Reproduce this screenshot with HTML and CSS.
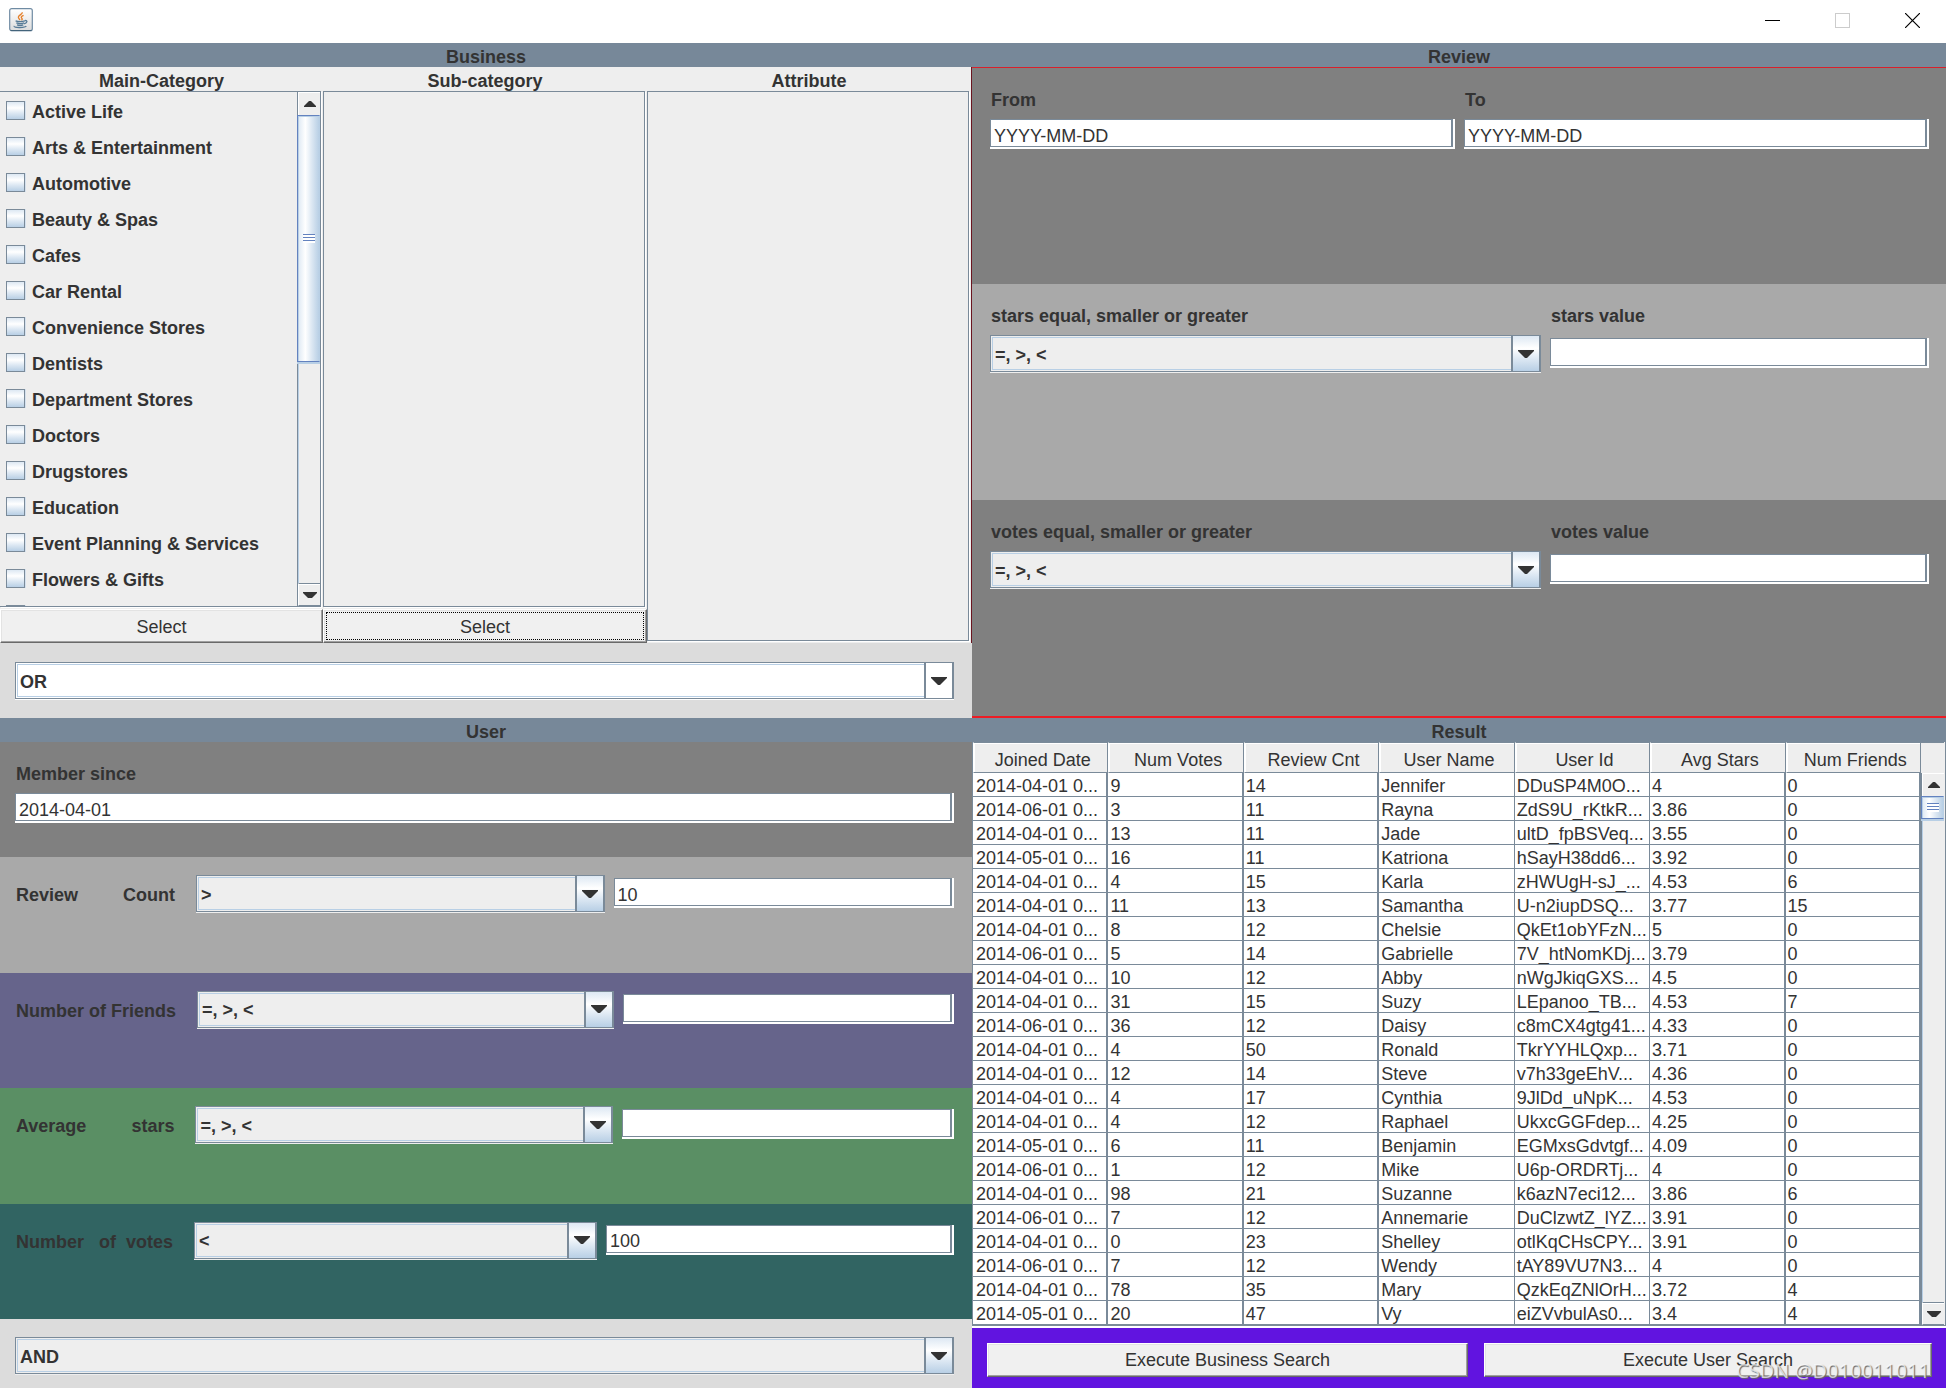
FILE: index.html
```html
<!DOCTYPE html>
<html lang="en">
<head>
<meta charset="utf-8">
<title>Business and User Search</title>
<link rel="stylesheet" href="styles.css">
</head>
<body>
<svg width="0" height="0" class="defs" aria-hidden="true">
  <symbol id="down" viewBox="0 0 16 8"><path d="M0 0h16v1L9 8H7L0 1z" fill="#333"/></symbol>
  <symbol id="down-small" viewBox="0 0 14 6"><path d="M0 0h14v1L9 6H5L0 1z" fill="#333"/></symbol>
  <symbol id="up-small" viewBox="0 0 12 6"><path d="M0 6h12V5L7 0H5L0 5z" fill="#333"/></symbol>
</svg>
<div class="app">
  <header class="titlebar">
    <svg class="java" viewBox="0 0 24 24" aria-label="Java">
      <defs><linearGradient id="tile" x1="0" y1="0" x2="0" y2="1"><stop offset="0" stop-color="#fff"/><stop offset="1" stop-color="#dcdcdc"/></linearGradient></defs>
      <rect x=".7" y=".7" width="22.600" height="22" rx="2" fill="url(#tile)" stroke="#6f8ba3" stroke-width="1.200"/>
      <path d="M1.500 22.600h21" stroke="#3f6078" stroke-width="1"/>
      <path d="M13.200 4.200c.6 2.200-4.600 3.300-3.800 5.400.3.900 1.300 1.400 1.400 2.600M14.600 7.400c-1.800.8-3.400 1.700-1.500 3.200.5.600-.1 1.200-.7 1.700" fill="none" stroke="#e5802b" stroke-width="1.400"/>
      <path d="M6.600 12.800c2.200.9 6.800.9 9.400.1M7.300 14.800c2 .8 5.600.8 7.900.1M8 16.800c1.900.6 4.300.6 6.300 0M16 12.600c2.800-.6 2.600 2.200-.8 3.200M5.400 18c-2 1.900 11 2.100 11.800.1" fill="none" stroke="#557a96" stroke-width="1.300"/>
    </svg>
    <div class="window-buttons">
      <button type="button" aria-label="Minimize"><svg width="15" height="15" viewBox="0 0 15 15"><path d="M0 7.500h15" stroke="#000"/></svg></button>
      <button type="button" aria-label="Maximize" disabled><svg width="15" height="15" viewBox="0 0 15 15"><rect x=".5" y=".5" width="14" height="14" fill="none" stroke="#ccc"/></svg></button>
      <button type="button" aria-label="Close"><svg width="15" height="15" viewBox="0 0 15 15"><path d="M0 0l15 15M15 0L0 15" stroke="#000" stroke-width="1.200"/></svg></button>
    </div>
  </header>

  <main class="quadrants">
    <section class="quadrant business">
      <h2 class="heading">Business</h2>
      <div class="lists">
        <div class="list-column">
          <h3>Main-Category</h3>
          <div class="list-box">
            <div class="checks">
              <label><input type="checkbox">Active Life</label>
              <label><input type="checkbox">Arts &amp; Entertainment</label>
              <label><input type="checkbox">Automotive</label>
              <label><input type="checkbox">Beauty &amp; Spas</label>
              <label><input type="checkbox">Cafes</label>
              <label><input type="checkbox">Car Rental</label>
              <label><input type="checkbox">Convenience Stores</label>
              <label><input type="checkbox">Dentists</label>
              <label><input type="checkbox">Department Stores</label>
              <label><input type="checkbox">Doctors</label>
              <label><input type="checkbox">Drugstores</label>
              <label><input type="checkbox">Education</label>
              <label><input type="checkbox">Event Planning &amp; Services</label>
              <label><input type="checkbox">Flowers &amp; Gifts</label>
              <label><input type="checkbox" aria-label="Food"></label>
            </div>
            <div class="scrollbar">
              <button type="button" class="step" aria-label="Scroll up"><svg width="12" height="6"><use href="#up-small"/></svg></button>
              <div class="track"><div class="thumb thumb-long"><i class="grip"></i></div></div>
              <button type="button" class="step step-down" aria-label="Scroll down"><svg width="14" height="6"><use href="#down-small"/></svg></button>
            </div>
          </div>
          <button type="button" class="push">Select</button>
        </div>
        <div class="list-column">
          <h3>Sub-category</h3>
          <div class="list-box"></div>
          <button type="button" class="push push-focus">Select</button>
        </div>
        <div class="list-column">
          <h3>Attribute</h3>
          <div class="list-box"></div>
        </div>
      </div>
      <div class="joiner">
        <div class="combo combo-white"><select aria-label="Business match"><option>OR</option><option>AND</option></select><span class="arrow"><svg width="16" height="8"><use href="#down"/></svg></span></div>
      </div>
    </section>

    <section class="quadrant">
      <h2 class="heading">Review</h2>
      <div class="review">
        <div class="review-panel gray halves">
          <div class="field"><label for="from">From</label><input class="text" id="from" value="YYYY-MM-DD"></div>
          <div class="field"><label for="to">To</label><input class="text" id="to" value="YYYY-MM-DD"></div>
        </div>
        <div class="review-panel silver compare">
          <div class="field"><label for="stars-op">stars equal, smaller or greater</label>
            <div class="combo"><select id="stars-op"><option>=, &gt;, &lt;</option></select><span class="arrow"><svg width="16" height="8"><use href="#down"/></svg></span></div></div>
          <div class="field field-value"><label for="stars-val">stars value</label><input class="text" id="stars-val"></div>
        </div>
        <div class="review-panel gray compare">
          <div class="field"><label for="votes-op">votes equal, smaller or greater</label>
            <div class="combo"><select id="votes-op"><option>=, &gt;, &lt;</option></select><span class="arrow"><svg width="16" height="8"><use href="#down"/></svg></span></div></div>
          <div class="field field-value"><label for="votes-val">votes value</label><input class="text" id="votes-val"></div>
        </div>
      </div>
    </section>

    <section class="quadrant">
      <h2 class="heading">User</h2>
      <div class="user">
        <div class="user-panel gray member">
          <label for="since">Member since</label><input class="text" id="since" value="2014-04-01">
        </div>
        <div class="user-panel silver">
          <label for="rc-op">Review         Count</label>
          <div class="combo"><select id="rc-op"><option>&gt;</option></select><span class="arrow"><svg width="16" height="8"><use href="#down"/></svg></span></div>
          <input class="text" aria-label="Review count value" value="10">
        </div>
        <div class="user-panel violet open">
          <label for="nf-op">Number of Friends</label>
          <div class="combo"><select id="nf-op"><option>=, &gt;, &lt;</option></select><span class="arrow"><svg width="16" height="8"><use href="#down"/></svg></span></div>
          <input class="text" aria-label="Number of friends value">
        </div>
        <div class="user-panel green open">
          <label for="as-op">Average         stars</label>
          <div class="combo"><select id="as-op"><option>=, &gt;, &lt;</option></select><span class="arrow"><svg width="16" height="8"><use href="#down"/></svg></span></div>
          <input class="text" aria-label="Average stars value">
        </div>
        <div class="user-panel teal">
          <label for="nv-op">Number   of  votes</label>
          <div class="combo"><select id="nv-op"><option>&lt;</option></select><span class="arrow"><svg width="16" height="8"><use href="#down"/></svg></span></div>
          <input class="text" aria-label="Number of votes value" value="100">
        </div>
      </div>
      <div class="joiner joiner-user">
        <div class="combo"><select aria-label="User match"><option>AND</option><option>OR</option></select><span class="arrow"><svg width="16" height="8"><use href="#down"/></svg></span></div>
      </div>
    </section>

    <section class="quadrant">
      <h2 class="heading">Result</h2>
      <div class="result">
        <table>
          <thead><tr><th>Joined Date</th><th>Num Votes</th><th>Review Cnt</th><th>User Name</th><th>User Id</th><th>Avg Stars</th><th>Num Friends</th></tr></thead>
          <tbody>
            <tr><td>2014-04-01 0...</td><td>9</td><td>14</td><td>Jennifer</td><td>DDuSP4M0O...</td><td>4</td><td>0</td></tr>
            <tr><td>2014-06-01 0...</td><td>3</td><td>11</td><td>Rayna</td><td>ZdS9U_rKtkR...</td><td>3.86</td><td>0</td></tr>
            <tr><td>2014-04-01 0...</td><td>13</td><td>11</td><td>Jade</td><td>ultD_fpBSVeq...</td><td>3.55</td><td>0</td></tr>
            <tr><td>2014-05-01 0...</td><td>16</td><td>11</td><td>Katriona</td><td>hSayH38dd6...</td><td>3.92</td><td>0</td></tr>
            <tr><td>2014-04-01 0...</td><td>4</td><td>15</td><td>Karla</td><td>zHWUgH-sJ_...</td><td>4.53</td><td>6</td></tr>
            <tr><td>2014-04-01 0...</td><td>11</td><td>13</td><td>Samantha</td><td>U-n2iupDSQ...</td><td>3.77</td><td>15</td></tr>
            <tr><td>2014-04-01 0...</td><td>8</td><td>12</td><td>Chelsie</td><td>QkEt1obYFzN...</td><td>5</td><td>0</td></tr>
            <tr><td>2014-06-01 0...</td><td>5</td><td>14</td><td>Gabrielle</td><td>7V_htNomKDj...</td><td>3.79</td><td>0</td></tr>
            <tr><td>2014-04-01 0...</td><td>10</td><td>12</td><td>Abby</td><td>nWgJkiqGXS...</td><td>4.5</td><td>0</td></tr>
            <tr><td>2014-04-01 0...</td><td>31</td><td>15</td><td>Suzy</td><td>LEpanoo_TB...</td><td>4.53</td><td>7</td></tr>
            <tr><td>2014-06-01 0...</td><td>36</td><td>12</td><td>Daisy</td><td>c8mCX4gtg41...</td><td>4.33</td><td>0</td></tr>
            <tr><td>2014-04-01 0...</td><td>4</td><td>50</td><td>Ronald</td><td>TkrYYHLQxp...</td><td>3.71</td><td>0</td></tr>
            <tr><td>2014-04-01 0...</td><td>12</td><td>14</td><td>Steve</td><td>v7h33geEhV...</td><td>4.36</td><td>0</td></tr>
            <tr><td>2014-04-01 0...</td><td>4</td><td>17</td><td>Cynthia</td><td>9JlDd_uNpK...</td><td>4.53</td><td>0</td></tr>
            <tr><td>2014-04-01 0...</td><td>4</td><td>12</td><td>Raphael</td><td>UkxcGGFdep...</td><td>4.25</td><td>0</td></tr>
            <tr><td>2014-05-01 0...</td><td>6</td><td>11</td><td>Benjamin</td><td>EGMxsGdvtgf...</td><td>4.09</td><td>0</td></tr>
            <tr><td>2014-06-01 0...</td><td>1</td><td>12</td><td>Mike</td><td>U6p-ORDRTj...</td><td>4</td><td>0</td></tr>
            <tr><td>2014-04-01 0...</td><td>98</td><td>21</td><td>Suzanne</td><td>k6azN7eci12...</td><td>3.86</td><td>6</td></tr>
            <tr><td>2014-06-01 0...</td><td>7</td><td>12</td><td>Annemarie</td><td>DuClzwtZ_lYZ...</td><td>3.91</td><td>0</td></tr>
            <tr><td>2014-04-01 0...</td><td>0</td><td>23</td><td>Shelley</td><td>otlKqCHsCPY...</td><td>3.91</td><td>0</td></tr>
            <tr><td>2014-06-01 0...</td><td>7</td><td>12</td><td>Wendy</td><td>tAY89VU7N3...</td><td>4</td><td>0</td></tr>
            <tr><td>2014-04-01 0...</td><td>78</td><td>35</td><td>Mary</td><td>QzkEqZNlOrH...</td><td>3.72</td><td>4</td></tr>
            <tr><td>2014-05-01 0...</td><td>20</td><td>47</td><td>Vy</td><td>eiZVvbulAs0...</td><td>3.4</td><td>4</td></tr>
          </tbody>
        </table>
        <div class="result-side">
          <div class="corner"></div>
          <div class="scrollbar">
            <button type="button" class="step" aria-label="Scroll results up"><svg width="12" height="6"><use href="#up-small"/></svg></button>
            <div class="track"><div class="thumb thumb-short"><i class="grip"></i></div></div>
            <button type="button" class="step step-down" aria-label="Scroll results down"><svg width="14" height="6"><use href="#down-small"/></svg></button>
          </div>
        </div>
      </div>
      <div class="actions">
        <button type="button" class="push">Execute Business Search</button>
        <button type="button" class="push">Execute User Search</button>
        <span class="watermark">CSDN @D010011011</span>
      </div>
    </section>
  </main>
</div>
</body>
</html>
```
FILE: styles.css
```css
:root {
  --line: #7a8a99;
  --light-line: #b8cfe5;
  --face: #eeeeee;
  --ink: #333333;
  --shine: linear-gradient(#dde8f3, #ffffff 35%, #dde8f3 65%, #b8cfe5);
}

* { box-sizing: border-box; }

body {
  margin: 0;
  color: var(--ink);
  background: var(--face);
  font: 18px/24px "Liberation Sans", Arial, sans-serif;
}

button, input, select { font: inherit; color: inherit; margin: 0; }
h2, h3 { margin: 0; font-size: 18px; line-height: 24px; text-align: center; }
label { font-weight: bold; white-space: pre; }
svg { display: block; }
.defs { position: absolute; }

.app {
  height: 100vh;
  min-height: 1388px;
  display: flex;
  flex-direction: column;
}

/* Title bar */
.titlebar {
  flex: none;
  height: 43px;
  padding: 8px 26px 0 9px;
  display: flex;
  justify-content: space-between;
  background: #fff;
}
.java { width: 24px; height: 24px; }
.window-buttons { display: flex; gap: 55px; padding-top: 5px; }
.window-buttons button { padding: 0; border: 0; background: none; height: 15px; width: 15px; }

/* Quadrants */
.quadrants {
  flex: 1;
  min-height: 0;
  display: grid;
  grid-template-columns: minmax(0, 486fr) minmax(0, 487fr);
  grid-template-rows: minmax(0, 675fr) minmax(0, 670fr);
}
.quadrant { display: flex; flex-direction: column; min-height: 0; }
.heading { flex: none; background: #778899; padding-top: 4px; line-height: 20px; }

.gray { background: #808080; }
.silver { background: #a9a9a9; }
.violet { background: #66648b; }
.green { background: #5a8f64; }
.teal { background: #316462; }

/* Business lists */
.lists {
  flex: 1;
  min-height: 0;
  display: grid;
  grid-template-columns: minmax(0, 323fr) minmax(0, 324fr) minmax(0, 324fr);
  border-right: 1px solid #6b1520;
}
.list-column { display: flex; flex-direction: column; min-height: 0; }
.list-column h3 { padding-top: 4px; line-height: 20px; }
.list-box {
  flex: 1;
  min-height: 0;
  margin-right: 2px;
  margin-bottom: 2px;
  display: flex;
  border: 1px solid var(--line);
  box-shadow: 1px 1px #fff;
}
.list-column:first-child .list-box { border-left: 0; }
.checks { flex: 1; overflow: hidden; }
.checks label { display: flex; align-items: center; gap: 7px; height: 36px; padding: 4px 0 0 6px; }
.checks input {
  appearance: none;
  width: 19px;
  height: 19px;
  margin-bottom: 4px;
  border: 1px solid var(--line);
  background: var(--shine);
  box-shadow: 1px 0 #d5e1ee;
}

/* Scroll bars */
.scrollbar {
  width: 23px;
  display: flex;
  flex-direction: column;
  border-left: 1px solid var(--line);
}
.step {
  flex: none;
  height: 23px;
  padding: 0;
  display: flex;
  align-items: center;
  justify-content: center;
  border: 0;
  border-top: 1px solid #fff;
  border-left: 1px solid #fff;
  background: var(--face);
}
.step-down { border-top: 1px solid var(--line); box-shadow: inset 0 1px #fff; border-bottom: 1px solid var(--line); }
.track { flex: 1; border-left: 1px solid var(--light-line); background: var(--face); }
.thumb {
  display: flex;
  align-items: center;
  justify-content: center;
  margin-left: -2px;
  border: 1px solid #6382bf;
  border-right: 1px solid var(--light-line);
  box-shadow: inset 1px 1px var(--light-line), 0 2px var(--light-line);
  background: linear-gradient(90deg, #dde8f3, #fff 35%, #dde8f3 65%, #b8cfe5);
}
.thumb-long { height: 247px; }
.thumb-short { height: 23px; }
.grip {
  width: 12px;
  height: 9px;
  background: repeating-linear-gradient(#6382bf 0 1px, #fff 1px 3px);
}

/* Buttons */
.push {
  flex: none;
  height: 34px;
  padding: 0;
  border: 1px solid #fff;
  border-right: 1px solid #696969;
  border-bottom: 1px solid #696969;
  background: #f0f0f0;
  box-shadow: inset -1px -1px #a0a0a0, inset 1px 1px #e3e3e3;
}
.list-column .push { padding-top: 2px; }
.push-focus { outline: 1px dotted #000; outline-offset: -4px; }

/* Combo boxes and text fields */
.combo { position: relative; display: flex; height: 38px; }
.combo select {
  appearance: none;
  width: 100%;
  height: 37px;
  padding: 2px 32px 0 4px;
  border: 1px solid var(--line);
  border-right: 2px solid var(--line);
  border-radius: 0;
  background: var(--face);
  box-shadow: 0 1px #eee, inset 0 0 0 1px var(--face), inset 0 0 0 2px var(--light-line);
  font-weight: bold;
}
.arrow {
  position: absolute;
  top: 1px;
  right: 2px;
  width: 28px;
  height: 35px;
  display: flex;
  align-items: center;
  justify-content: center;
  border-left: 2px solid var(--line);
  background: var(--shine);
  pointer-events: none;
}
.combo-white select, .combo-white .arrow { background: #fff; }
.combo-white select { box-shadow: 0 1px #fff, inset 0 0 0 1px #fff, inset 0 0 0 2px var(--light-line); }

.text {
  display: block;
  width: 100%;
  min-width: 0;
  height: 30px;
  padding: 6px 4px 0;
  border: 2px solid #fff;
  border-width: 0 2px 2px 0;
  border-radius: 0;
  background: #fff;
  box-shadow: inset 1px 1px var(--line), inset -2px -1px var(--line);
}

.joiner { flex: none; background: #dcdcdc; padding: 19px 18px 18px 15px; }
.joiner-user { padding-bottom: 13px; padding-top: 18px; }

/* Review */
.review {
  flex: 1;
  min-height: 0;
  display: flex;
  flex-direction: column;
  border-top: 1px solid #d8202c;
  border-bottom: 2px solid #ed1c24;
}
.review-panel {
  flex: 1;
  display: grid;
  column-gap: 9px;
  align-items: start;
  padding: 20px 17px 0 18px;
}
.halves { grid-template-columns: 1fr 1fr; }
.compare { grid-template-columns: minmax(0, 551fr) minmax(0, 379fr); }
.field label { display: block; padding-left: 1px; }
.field .text { margin-top: 7px; }
.field .combo { margin-top: 7px; }
.field-value .text { margin-top: 10px; }

/* User */
.user { flex: 1; min-height: 0; display: grid; grid-template-rows: repeat(5, minmax(0, 1fr)); }
.user-panel {
  display: flex;
  align-items: flex-start;
  padding: 18px 18px 0 16px;
}
.user-panel label { flex: none; padding-top: 8px; margin-right: 21px; }
.user-panel .combo { flex: 408 1 0; margin-right: 9px; }
.user-panel .text { flex: 330 1 0; margin-top: 3px; }
.open .combo { flex-grow: 417; }
.open .text { flex-grow: 321; }
.teal .combo { flex-grow: 403; }
.teal .text { flex-grow: 338; }
.member { display: block; padding: 20px 18px 0 15px; }
.member label { display: block; padding: 0 0 0 1px; }
.member .text { margin-top: 7px; }

/* Result */
.result {
  flex: 1;
  min-height: 0;
  display: flex;
  align-items: stretch;
  border-left: 1px solid var(--line);
  border-bottom: 1px solid var(--line);
  background: var(--face);
  overflow: hidden;
}
table { flex: 1; width: 0; height: 583px; table-layout: fixed; border-spacing: 0; background: #fff; }
th {
  height: 31px;
  padding: 4px 0 0 4px;
  border: 1px solid var(--line);
  border-left: 1px solid #fff;
  background: var(--face);
  box-shadow: inset 1px 1px #fff;
  font-weight: normal;
  line-height: 22px;
}
td {
  height: 24px;
  padding: 3px 0 0 2px;
  border-right: 2px solid var(--line);
  border-bottom: 1px solid var(--line);
  line-height: 20px;
  white-space: nowrap;
  overflow: hidden;
}
td:first-child { padding-left: 3px; }
td:nth-child(4), td:nth-child(5) { border-right-width: 1px; }
.result-side { width: 25px; display: flex; flex-direction: column; padding-right: 1px; border-right: 1px solid var(--line); }
.result-side .scrollbar { flex: 1; }
.corner { height: 31px; border-top: 1px solid var(--line); }

.actions {
  flex: none;
  position: relative;
  display: grid;
  grid-template-columns: minmax(0, 481fr) minmax(0, 448fr);
  gap: 16px;
  padding: 15px 14px 11px 15px;
  border-top: 2px solid #fff;
  background: #6114e0;
}
.watermark {
  position: absolute;
  right: 16px;
  bottom: 5px;
  color: rgba(255, 255, 255, 0.7);
  text-shadow: 1px 1px 1px #666;
  font: 20px/24px "Open Sans", "Noto Sans", sans-serif;
}
```
